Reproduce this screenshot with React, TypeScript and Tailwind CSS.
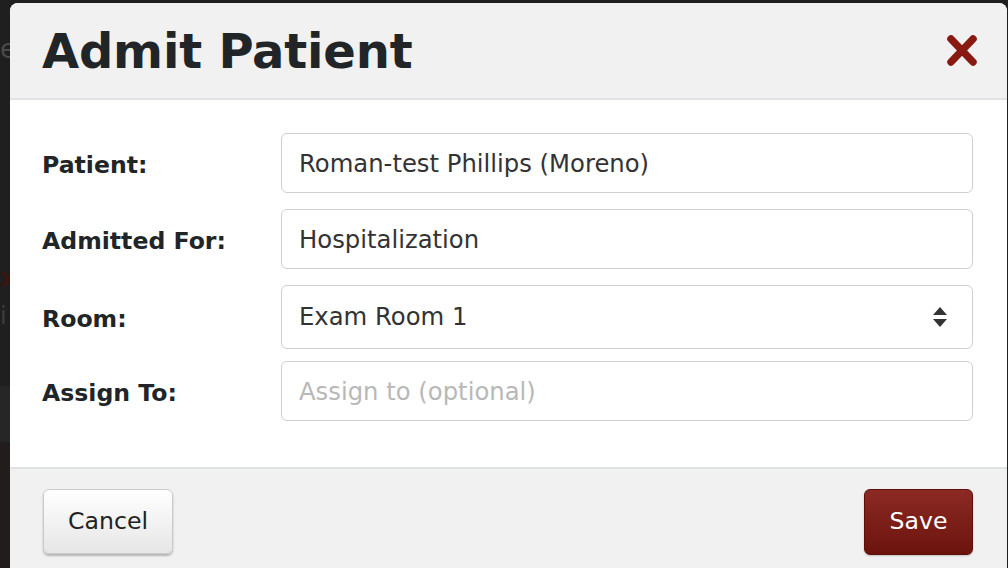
import React from "react";

const font = { fontFamily: '"DejaVu Sans", Verdana, sans-serif' };

function CloseIcon() {
  return (
    <svg width="34" height="33" viewBox="0 0 34 33" aria-hidden="true">
      <g stroke="#881a12" strokeWidth="7.5" strokeLinecap="round">
        <path d="M6 5 L28 28" />
        <path d="M28 5 L6 28" />
      </g>
    </svg>
  );
}

function SelectArrows() {
  return (
    <svg width="16" height="22" viewBox="0 0 16 22" aria-hidden="true">
      <path d="M8 1 L15 9 L1 9 Z" fill="#333" />
      <path d="M1 13 L15 13 L8 21 Z" fill="#333" />
    </svg>
  );
}

const inputCls =
  "w-full rounded-[6px] border-[1.5px] border-[#cfcfcf] bg-white px-[17px] text-[24.3px] text-[#333] outline-none placeholder:text-[#b8b8b8]";

const labelCls = "pt-[6px] text-[23.6px] font-bold text-[#222528]";

export default function App() {
  return (
    <div className="relative h-[568px] w-[1008px] overflow-hidden bg-[#1f1f1f]" style={font}>
      {/* page behind the overlay */}
      <div className="absolute left-0 top-[36px] text-[26px] leading-none text-[#4a4a4a]">e</div>
      <div className="absolute left-0 top-[266px] text-[24px] font-bold leading-none text-[#3a1512]">x</div>
      <div className="absolute left-0 top-[304px] text-[24px] leading-none text-[#3c3c3c]">i</div>
      <div className="absolute left-0 top-[386px] h-[56px] w-[10px] bg-[#262626]" />
      <div className="absolute left-0 top-[442px] h-[126px] w-[10px] bg-[#231c1c]" />

      {/* modal */}
      <div className="relative ml-[10px] mt-[3px] flex h-[565px] w-[997px] flex-col overflow-hidden rounded-t-[8px] bg-white">
        {/* Header */}
        <div className="flex h-[97px] shrink-0 items-center justify-between border-b-2 border-[#dfe3e6] bg-[#f1f1f1] pl-[32px] pr-[28px]">
          <h1 className="text-[48px] font-bold leading-none tracking-[-0.2px] text-[#222528]">
            Admit Patient
          </h1>
          <button className="flex items-center justify-center">
            <CloseIcon />
          </button>
        </div>

        {/* Body */}
        <div className="grid shrink-0 grid-cols-[239px_1fr] items-center pb-[46px] pl-[32px] pr-[34px] pt-[33px]">
          <label className={labelCls}>Patient:</label>
          <input className={`${inputCls} h-[60px]`} defaultValue="Roman-test Phillips (Moreno)" />

          <div className="col-span-2 h-[16px]" />

          <label className={labelCls}>Admitted For:</label>
          <input className={`${inputCls} h-[60px]`} defaultValue="Hospitalization" />

          <div className="col-span-2 h-[16px]" />

          <label className={labelCls}>Room:</label>
          <div className="relative">
            <select className={`${inputCls} h-[64px] appearance-none`} defaultValue="Exam Room 1">
              <option>Exam Room 1</option>
              <option>Exam Room 2</option>
              <option>Exam Room 3</option>
            </select>
            <div className="pointer-events-none absolute right-[25px] top-[21px]">
              <SelectArrows />
            </div>
          </div>

          <div className="col-span-2 h-[12px]" />

          <label className={labelCls}>Assign To:</label>
          <input className={`${inputCls} h-[60px]`} placeholder="Assign to (optional)" />
        </div>

        {/* Footer */}
        <div className="flex flex-1 items-start justify-between border-t-2 border-[#dfe3e6] bg-[#f1f1f1] pl-[33px] pr-[34px] pt-[20px]">
          <button className="h-[65px] w-[130px] rounded-[6px] border border-[#cbcbcb] bg-gradient-to-b from-white to-[#e6e6e6] text-[23.6px] text-[#222] shadow-[0_2px_2px_rgba(0,0,0,0.25)]">
            Cancel
          </button>
          <button className="h-[66px] w-[109px] rounded-[6px] border border-[#5f0f0a] bg-gradient-to-b from-[#8c2a24] to-[#6c130d] text-[23.6px] text-white shadow-[0_1px_2px_rgba(0,0,0,0.2)]">
            Save
          </button>
        </div>
      </div>
    </div>
  );
}
